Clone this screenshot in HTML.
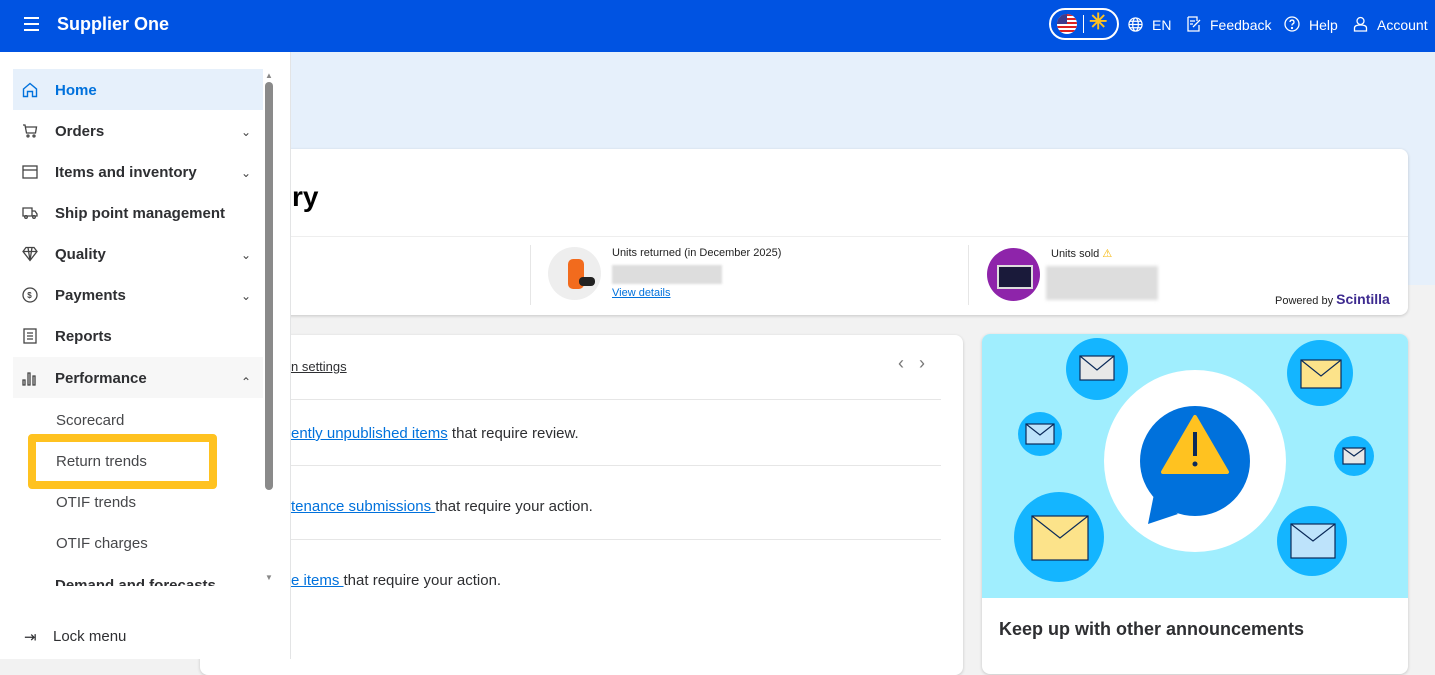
<!DOCTYPE html>
<html><head><meta charset="utf-8"><style>
*{margin:0;padding:0;box-sizing:border-box}
body{width:1435px;height:659px;overflow:hidden;font-family:"Liberation Sans",sans-serif;background:#f2f2f2;position:relative;color:#2e2f32}
.hdr{position:absolute;left:0;top:0;width:1435px;height:52px;background:#0053e2;color:#fff}
.band{position:absolute;left:0;top:52px;width:1435px;height:233px;background:#e6f0fb}
.abs{position:absolute}
.card{position:absolute;background:#fff;border-radius:8px;box-shadow:0 1px 3px rgba(0,0,0,.18)}
.side{position:absolute;left:0;top:52px;width:291px;height:607px;background:#fff;border-right:1px solid #e3e4e5}
.nav{position:absolute;left:13px;width:250px;height:41px;font-size:15px;font-weight:bold;color:#2e2f32;line-height:44px;padding-left:42px}
.nav svg.i{position:absolute;left:9px;top:13px}
.chev{position:absolute;left:228px;top:0;font-weight:normal;font-size:12px;color:#444}
.sub{position:absolute;left:56px;font-size:15px;color:#46474a}
a{color:#0071dc;text-decoration:underline}
.t{position:absolute;font-size:15px;color:#2e2f32}
</style></head><body>
<div class="hdr">
 <div class="abs" style="left:24px;top:17px;width:15px;height:2px;background:#fff;box-shadow:0 6px 0 #fff,0 12px 0 #fff"></div>
 <div class="abs" style="left:57px;top:14px;font-size:18px;font-weight:bold">Supplier One</div>
 <div class="abs" style="left:1049px;top:8px;width:70px;height:32px;border:2px solid #fff;border-radius:16px"></div>
 <svg class="abs" style="left:1056px;top:13px" width="22" height="22" viewBox="0 0 22 22"><clipPath id="c"><circle cx="11" cy="11" r="10"/></clipPath><g clip-path="url(#c)"><rect width="22" height="22" fill="#fff"/><g fill="#d22"><rect y="1" width="22" height="2"/><rect y="5" width="22" height="2"/><rect y="9" width="22" height="2"/><rect y="13" width="22" height="2"/><rect y="17" width="22" height="2"/></g><rect width="11" height="11" fill="#3c3b8e"/></g></svg>
 <div class="abs" style="left:1083px;top:15px;width:1px;height:18px;background:#fff"></div>
 <div class="abs" style="left:1089px;top:9px;font-size:22px;color:#ffc220;font-weight:bold">✳</div>
 <svg class="abs" style="left:1128px;top:17px" width="15" height="15" viewBox="0 0 16 16" fill="none" stroke="#fff" stroke-width="1.3"><circle cx="8" cy="8" r="7"/><ellipse cx="8" cy="8" rx="3" ry="7"/><path d="M1 8h14M2 4.5h12M2 11.5h12"/></svg>
 <div class="abs" style="left:1152px;top:17px;font-size:14px">EN</div>
 <svg class="abs" style="left:1186px;top:16px" width="16" height="16" viewBox="0 0 16 16" fill="none" stroke="#fff" stroke-width="1.3"><path d="M2 1h9v4M2 1v14h11V9M4 5h5M4 8h3M7 11l7-7"/></svg>
 <div class="abs" style="left:1210px;top:17px;font-size:14px">Feedback</div>
 <svg class="abs" style="left:1284px;top:16px" width="16" height="16" viewBox="0 0 16 16" fill="none" stroke="#fff" stroke-width="1.3"><circle cx="8" cy="8" r="7"/><path d="M6 6a2 2 0 1 1 2.5 2c-.5.2-.5.7-.5 1.5"/><circle cx="8" cy="12" r=".5" fill="#fff"/></svg>
 <div class="abs" style="left:1309px;top:17px;font-size:14px">Help</div>
 <svg class="abs" style="left:1353px;top:16px" width="15" height="16" viewBox="0 0 15 16" fill="none" stroke="#fff" stroke-width="1.3"><circle cx="7.5" cy="5" r="3.5"/><path d="M1.5 15v-3c0-2 2-3 6-3s6 1 6 3v3z"/></svg>
 <div class="abs" style="left:1377px;top:17px;font-size:14px">Account</div>
</div>
<div class="band"></div>

<div class="card" style="left:200px;top:149px;width:1208px;height:166px">
 <div class="abs" style="left:92px;top:32px;font-size:28px;font-weight:bold;color:#000">ry</div>
 <div class="abs" style="left:0;top:87px;width:1208px;height:1px;background:#eee"></div>
 <div class="abs" style="left:330px;top:96px;width:1px;height:60px;background:#e6e6e6"></div>
 <div class="abs" style="left:768px;top:96px;width:1px;height:60px;background:#e6e6e6"></div>
 <div class="abs" style="left:348px;top:98px;width:53px;height:53px;border-radius:50%;background:#eee"></div>
 <div class="abs" style="left:368px;top:110px;width:16px;height:30px;border-radius:5px;background:#f26b1d"></div>
 <div class="abs" style="left:379px;top:128px;width:16px;height:9px;border-radius:4px;background:#222"></div>
 <div class="abs" style="left:412px;top:98px;font-size:11px;color:#222">Units returned (in December 2025)</div>
 <div class="abs" style="left:412px;top:116px;width:110px;height:19px;background:#ddd;filter:blur(1px)"></div>
 <div class="abs" style="left:412px;top:138px;font-size:11px"><a>View details</a></div>
 <div class="abs" style="left:787px;top:99px;width:53px;height:53px;border-radius:50%;background:#8e24aa"></div>
 <div class="abs" style="left:797px;top:116px;width:36px;height:24px;background:#1a1a3a;border:2px solid #ddd"></div>
 <div class="abs" style="left:851px;top:98px;font-size:11px;color:#222">Units sold <span style="color:#f5b400">⚠</span></div>
 <div class="abs" style="left:846px;top:117px;width:112px;height:34px;background:#ddd;filter:blur(1.5px)"></div>
 <div class="abs" style="left:1075px;top:142px;font-size:11px;color:#222">Powered by <b style="color:#3d2a8f;font-size:14px">Scintilla</b></div>
</div>

<div class="card" style="left:200px;top:335px;width:763px;height:340px">
 <div class="t" style="left:91px;top:24px;font-size:13px;text-decoration:underline">n settings</div>
 <div class="abs" style="left:698px;top:18px;font-size:18px;color:#777">‹&nbsp;&nbsp;&nbsp;›</div>
 <div class="abs" style="left:91px;top:64px;width:650px;height:1px;background:#e6e6e6"></div>
 <div class="t" style="left:91px;top:90px"><a>ently unpublished items</a> that require review.</div>
 <div class="abs" style="left:91px;top:130px;width:650px;height:1px;background:#e6e6e6"></div>
 <div class="t" style="left:91px;top:163px"><a>tenance submissions </a>that require your action.</div>
 <div class="abs" style="left:91px;top:204px;width:650px;height:1px;background:#e6e6e6"></div>
 <div class="t" style="left:91px;top:237px"><a>e items </a>that require your action.</div>
</div>

<div class="card" style="left:982px;top:334px;width:426px;height:340px;overflow:hidden">
 <svg width="426" height="264" style="display:block">
  <rect width="426" height="264" fill="#a0eefe"/>
  <g fill="#14b5ff"><circle cx="115" cy="35" r="31"/><circle cx="338" cy="39" r="33"/><circle cx="58" cy="100" r="22"/><circle cx="372" cy="122" r="20"/><circle cx="77" cy="203" r="45"/><circle cx="330" cy="207" r="35"/></g>
  <circle cx="213" cy="127" r="91" fill="#fff"/>
  <circle cx="213" cy="127" r="55" fill="#0071dc"/>
  <path d="M172 160l-6 30 30-10z" fill="#0071dc"/>
  <path d="M213 83l32 55h-64z" fill="#ffc220" stroke="#ffc220" stroke-width="4" stroke-linejoin="round"/>
  <rect x="211" y="98" width="4" height="24" fill="#0b2a59"/><circle cx="213" cy="130" r="2.5" fill="#0b2a59"/>
  <g stroke="#0b2a59" stroke-width="1.2">
   <rect x="98" y="22" width="34" height="24" fill="#e8e8e8"/><path d="M98 22l17 14 17-14" fill="none"/>
   <rect x="319" y="26" width="40" height="28" fill="#fce38a"/><path d="M319 26l20 16 20-16" fill="none"/>
   <rect x="44" y="90" width="28" height="20" fill="#bde3fb"/><path d="M44 90l14 11 14-11" fill="none"/>
   <rect x="361" y="114" width="22" height="16" fill="#e8e8e8"/><path d="M361 114l11 8 11-8" fill="none"/>
   <rect x="50" y="182" width="56" height="44" fill="#fce38a"/><path d="M50 182l28 22 28-22" fill="none"/>
   <rect x="309" y="190" width="44" height="34" fill="#bde3fb"/><path d="M309 190l22 17 22-17" fill="none"/>
  </g>
 </svg>
 <div class="abs" style="left:17px;top:285px;font-size:18px;font-weight:bold;color:#2e2f32">Keep up with other announcements</div>
</div>

<div class="side">
 <div class="nav" style="top:17px;background:#e6f0fb;color:#0071dc">Home<svg class="i" width="16" height="16" viewBox="0 0 16 16" fill="none" stroke="#0071dc" stroke-width="1.4"><path d="M1.5 7L8 1.5 14.5 7v7.5h-4v-5h-5v5h-4z"/></svg></div>
 <div class="nav" style="top:58px">Orders<svg class="i" width="16" height="16" viewBox="0 0 16 16" fill="none" stroke="#444" stroke-width="1.3"><path d="M1 2h2l1.5 8h9l1-6H4"/><circle cx="6" cy="13" r="1"/><circle cx="12" cy="13" r="1"/></svg><span class="chev">⌄</span></div>
 <div class="nav" style="top:99px">Items and inventory<svg class="i" width="16" height="16" viewBox="0 0 16 16" fill="none" stroke="#444" stroke-width="1.3"><rect x="1" y="2" width="14" height="12"/><path d="M1 6h14"/></svg><span class="chev">⌄</span></div>
 <div class="nav" style="top:140px">Ship point management<svg class="i" width="16" height="16" viewBox="0 0 16 16" fill="none" stroke="#444" stroke-width="1.3"><path d="M1 3h9v8H1zM10 6h3l2 3v2h-5"/><circle cx="4" cy="12" r="1.3"/><circle cx="12" cy="12" r="1.3"/></svg></div>
 <div class="nav" style="top:181px">Quality<svg class="i" width="16" height="16" viewBox="0 0 16 16" fill="none" stroke="#444" stroke-width="1.3"><path d="M4 1.5h8l3 4-7 9-7-9zM1 5.5h14M6 1.5l2 13 2-13"/></svg><span class="chev">⌄</span></div>
 <div class="nav" style="top:222px">Payments<svg class="i" width="16" height="16" viewBox="0 0 16 16" fill="none" stroke="#444" stroke-width="1.3"><circle cx="8" cy="8" r="7"/><text x="5.3" y="11" font-size="8" fill="#444" stroke="none">$</text></svg><span class="chev">⌄</span></div>
 <div class="nav" style="top:263px">Reports<svg class="i" width="16" height="16" viewBox="0 0 16 16" fill="none" stroke="#444" stroke-width="1.3"><rect x="2" y="1" width="12" height="14"/><path d="M5 5h6M5 8h6M5 11h6"/></svg></div>
 <div class="nav" style="top:305px;background:#f7f7f7">Performance<svg class="i" width="16" height="16" viewBox="0 0 16 16" fill="none" stroke="#444" stroke-width="1.3"><path d="M1 10h2v5H1zM6 3h2v12H6zM11 6h2v9h-2z"/></svg><span class="chev" style="top:3px">⌃</span></div>
 <div class="sub" style="top:360px">Scorecard</div>
 <div class="abs" style="left:28px;top:382px;width:189px;height:55px;border:8px solid #ffc220;border-radius:4px"></div>
 <div class="sub" style="top:401px">Return trends</div>
 <div class="sub" style="top:442px">OTIF trends</div>
 <div class="sub" style="top:483px">OTIF charges</div>
 <div class="abs" style="left:0;top:516px;width:263px;height:18px;overflow:hidden"><div class="nav" style="top:0;left:13px;line-height:36px">Demand and forecasts<span class="chev" style="top:0">⌄</span></div></div>
 <div class="abs" style="left:265px;top:30px;width:8px;height:408px;background:#8a8a8a;border-radius:4px"></div>
 <div class="abs" style="left:265px;top:19px;font-size:8px;color:#888">▲</div>
 <div class="abs" style="left:265px;top:521px;font-size:8px;color:#888">▼</div>
 <div class="abs" style="left:24px;top:576px;font-size:15px;color:#2e2f32">⇥</div>
 <div class="abs" style="left:53px;top:576px;font-size:15px;color:#2e2f32">Lock menu</div>
</div>
</body></html>
